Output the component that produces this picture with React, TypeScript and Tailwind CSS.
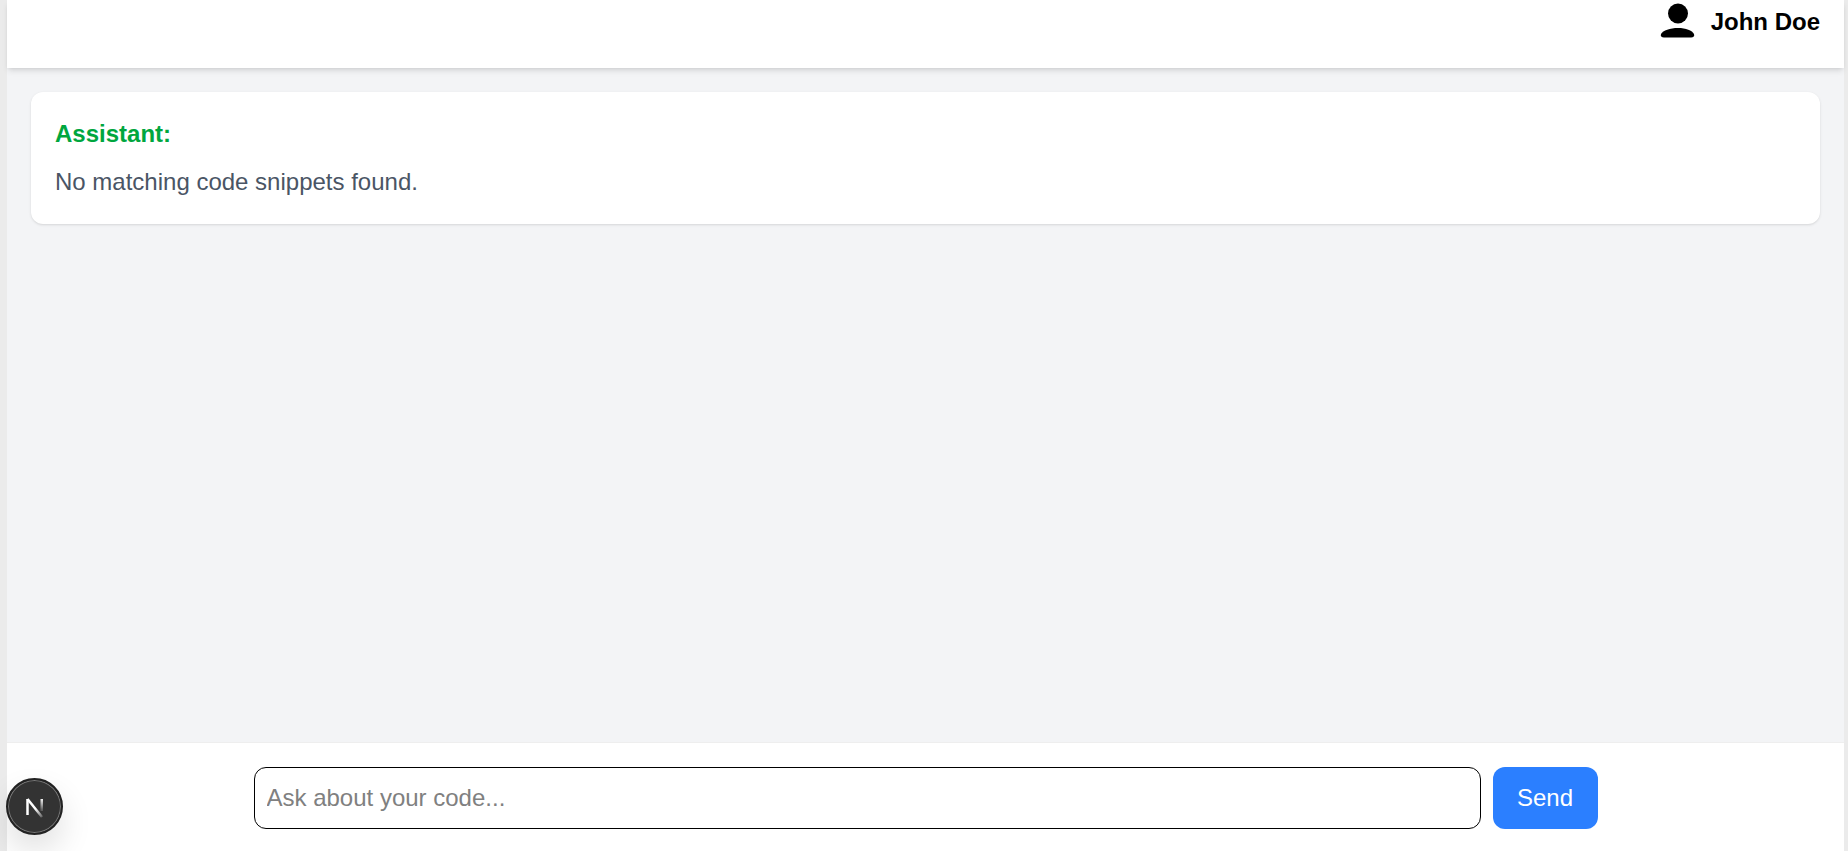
const UserGlyph = () => (
  <svg className="mt-[1px]" width="36" height="38" viewBox="0 0 36 38" fill="black" aria-hidden="true">
    <circle cx="19" cy="12.500" r="10" />
    <path d="M2 33C4 29.500 11 27 19 27s14 2.500 16 6c.8 2-.5 3.500-3 3.500H5c-2.500 0-3.800-1.500-3-3.500z" />
  </svg>
);

const NextBadge = () => (
  <div className="absolute bottom-[16px] left-[6px] w-[57px] h-[57px] rounded-full bg-[#333333] border-2 border-[#222222] ring-1 ring-inset ring-[#777777] flex items-center justify-center shadow-[0_16px_32px_rgba(0,0,0,0.12)]">
    <svg width="24" height="24" viewBox="0 0 24 24" fill="none" aria-hidden="true">
      <defs>
        <linearGradient id="nDiag" x1="4" y1="3" x2="20" y2="22" gradientUnits="userSpaceOnUse">
          <stop offset="0.55" stopColor="white" />
          <stop offset="1" stopColor="white" stopOpacity="0.2" />
        </linearGradient>
        <linearGradient id="nStem" x1="0" y1="3" x2="0" y2="15" gradientUnits="userSpaceOnUse">
          <stop offset="0" stopColor="white" />
          <stop offset="1" stopColor="white" stopOpacity="0.2" />
        </linearGradient>
      </defs>
      <path d="M4.500 4V20" stroke="white" strokeWidth="2.500" />
      <path d="M4.500 4L19 22" stroke="url(#nDiag)" strokeWidth="2.500" />
      <rect x="17.500" y="4" width="2.500" height="12" fill="url(#nStem)" />
    </svg>
  </div>
);

export default function App() {
  return (
    <div className="relative h-[851px] overflow-hidden bg-[#ebebeb] pl-[7px] pr-[4px] font-['Liberation_Sans',Arial,sans-serif]">
      <div className="flex flex-col h-full bg-[#f3f4f6]">
        <header className="h-[68px] shrink-0 bg-white shadow-[0_4px_6px_-1px_rgba(0,0,0,0.1),0_2px_4px_-2px_rgba(0,0,0,0.1)] flex justify-end items-start pr-[24px]">
          <div className="flex items-start gap-[16px]">
            <UserGlyph />
            <span className="text-[24px] leading-[36px] font-bold text-black mt-[4px]">John Doe</span>
          </div>
        </header>
        <main className="flex-1 p-[24px]">
          <div className="bg-white rounded-[12px] shadow-[0_1px_3px_0_rgba(0,0,0,0.1),0_1px_2px_-1px_rgba(0,0,0,0.1)] p-[24px]">
            <p className="text-[24px] leading-[36px] font-bold text-[#00a63e]">Assistant:</p>
            <p className="text-[24px] leading-[36px] mt-[12px] text-[#4a5565]">No matching code snippets found.</p>
          </div>
        </main>
        <footer className="h-[109px] shrink-0 bg-white border-t border-[#eeeeee] flex justify-center pt-[24px]">
          <div className="flex gap-[12px]">
            <input
              placeholder="Ask about your code..."
              className="w-[1227px] h-[62px] rounded-[12px] border border-black px-[12px] text-[24px] outline-none placeholder:text-[#808080]"
            />
            <button className="w-[105px] h-[62px] rounded-[12px] bg-[#2b7fff] text-white text-[24px]">Send</button>
          </div>
        </footer>
      </div>
      <NextBadge />
    </div>
  );
}
